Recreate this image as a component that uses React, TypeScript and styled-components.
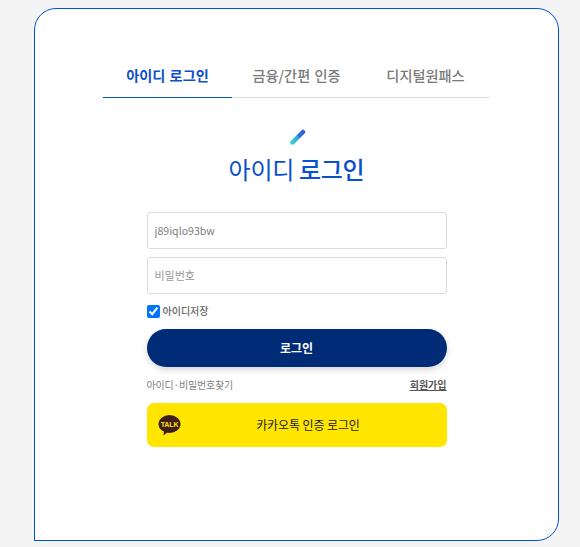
import React from "react";
import styled, { createGlobalStyle } from "styled-components";

const Global = createGlobalStyle`
  html, body { margin: 0; padding: 0; background: #f4f4f4; }
  body { font-family: "Noto Sans CJK KR", "Noto Sans", sans-serif; overflow: hidden; }
  * { box-sizing: border-box; }
`;

const Page = styled.div`
  width: 580px;
  height: 547px;
  padding: 8px 21px 6px 34px;
`;

const Card = styled.main`
  height: 533px;
  background: #fff;
  border: 1px solid #0052d4;
  border-radius: 22px 22px 22px 0;
  padding: 46px 68px 0;
  display: flex;
  flex-direction: column;
  align-items: center;
`;

const Tabs = styled.nav`
  width: 387px;
  display: flex;
  border-bottom: 1px solid #ddd;
`;

const Tab = styled.a<{ $active?: boolean }>`
  flex: 1;
  height: 43px;
  margin-bottom: -1px;
  font-size: 14.2px;
  line-height: 41px;
  font-weight: ${(p) => (p.$active ? 700 : 500)};
  text-align: center;
  word-spacing: 1px;
  color: ${(p) => (p.$active ? "#0d4fc9" : "#7a7a7a")};
  border-bottom: 1px solid ${(p) => (p.$active ? "#0052d4" : "transparent")};
`;

const Mark = styled.svg`
  display: block;
  margin-top: 30px;
`;

const Title = styled.h1`
  margin: 3px 0 0;
  height: 40px;
  font-size: 24px;
  line-height: 39px;
  font-weight: 400;
  color: #0a4fd0;
  letter-spacing: -0.3px;
  strong { font-weight: 500; }
`;

const Form = styled.form`
  width: 300px;
  margin-top: 23px;
  display: flex;
  flex-direction: column;
`;

const Field = styled.input`
  width: 100%;
  height: 37px;
  margin-bottom: 8px;
  padding: 0 7px;
  border: 1px solid #dcdcdc;
  border-radius: 3px;
  background: #fff;
  font-family: inherit;
  font-size: 10.6px;
  color: #7c7c7c;
  outline: none;
  &::placeholder { color: #9a9a9a; opacity: 1; font-size: 11px; }
`;

const Remember = styled.label`
  display: flex;
  align-items: center;
  gap: 3px;
  height: 14px;
  margin-top: 2px;
  font-size: 10px;
  line-height: 12px;
  font-weight: 500;
  color: #666;
`;

const Check = styled.input`
  width: 13px;
  height: 13px;
  margin: 0;
  accent-color: #0075ff;
`;

const LoginButton = styled.button`
  height: 38px;
  margin-top: 11px;
  border: 0;
  border-radius: 19px;
  background: #002c77;
  box-shadow: 0 3px 6px rgba(0, 0, 0, 0.16);
  color: #fff;
  font-family: inherit;
  font-size: 12px;
  font-weight: 700;
  padding: 0 0 1px;
`;

const LinkRow = styled.div`
  display: flex;
  justify-content: space-between;
  align-items: center;
  height: 20px;
  margin-top: 7px;
  font-size: 10px;
`;

const FindLink = styled.a`
  color: #808080;
  letter-spacing: -0.2px;
`;

const JoinLink = styled.a`
  color: #555;
  font-weight: 700;
  text-decoration: underline;
`;

const KakaoButton = styled.button`
  position: relative;
  height: 44px;
  margin-top: 9px;
  border: 0;
  border-radius: 7px;
  background: #ffe500;
  color: #1c1c1c;
  font-family: inherit;
  font-size: 12px;
  font-weight: 400;
  letter-spacing: -0.1px;
  text-align: center;
  padding: 0 0 2px 23px;
`;

const TalkIcon = styled.svg`
  position: absolute;
  left: 11px;
  top: 12px;
`;

export default function App() {
  return (
    <Page>
      <Global />
      <Card>
        <Tabs>
          <Tab $active>아이디 로그인</Tab>
          <Tab>금융/간편 인증</Tab>
          <Tab>디지털원패스</Tab>
        </Tabs>
        <Mark width="18" height="18" viewBox="0 0 18 18">
          <defs>
            <linearGradient id="stroke" x1="0" y1="1" x2="1" y2="0">
              <stop offset="0" stopColor="#2fd0d0" />
              <stop offset="0.5" stopColor="#2fa8d8" />
              <stop offset="0.6" stopColor="#2f70dc" />
              <stop offset="1" stopColor="#2f5fe0" />
            </linearGradient>
          </defs>
          <line x1="4.5" y1="14.5" x2="15" y2="4" stroke="url(#stroke)" strokeWidth="4.5" strokeLinecap="round" />
        </Mark>
        <Title>
          아이디 <strong>로그인</strong>
        </Title>
        <Form>
          <Field defaultValue="j89iqlo93bw" />
          <Field type="password" placeholder="비밀번호" />
          <Remember>
            <Check type="checkbox" defaultChecked />
            아이디저장
          </Remember>
          <LoginButton type="button">로그인</LoginButton>
          <LinkRow>
            <FindLink>아이디·비밀번호찾기</FindLink>
            <JoinLink>회원가입</JoinLink>
          </LinkRow>
          <KakaoButton type="button">
            <TalkIcon width="23" height="21" viewBox="0 0 23 21">
              <ellipse cx="11.5" cy="9" rx="11" ry="9" fill="#3c1e1e" />
              <path d="M6 15 L5.5 20.5 L11 16 Z" fill="#3c1e1e" />
              <text x="11.5" y="11.5" textAnchor="middle" fontSize="7" fontWeight="700" fill="#ffe500" fontFamily="Liberation Sans, sans-serif">TALK</text>
            </TalkIcon>
            카카오톡 인증 로그인
          </KakaoButton>
        </Form>
      </Card>
    </Page>
  );
}
